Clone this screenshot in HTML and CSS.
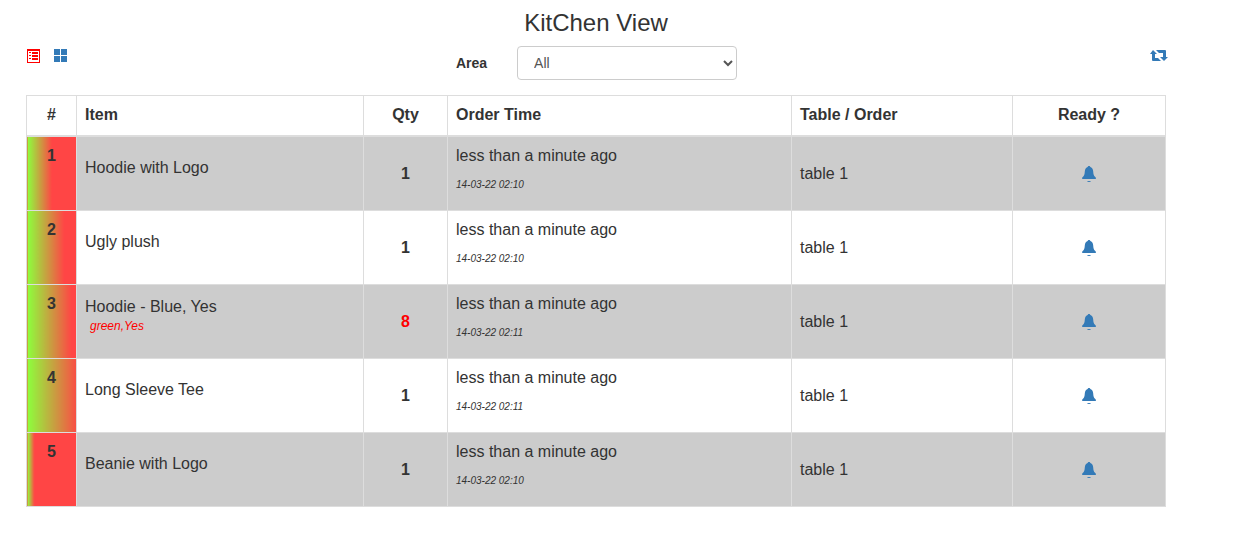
FILE: index.html
```
<!DOCTYPE html>
<html lang="en">
<head>
    <meta charset="UTF-8">
    <meta name="viewport" content="width=device-width, initial-scale=1.0">
    <title>KitChen View</title>
    <link rel="stylesheet" href="styles.css">
</head>
<body>
    <svg class="sprite" aria-hidden="true">
        <symbol id="bell" viewBox="0 0 14 16">
            <path d="M7 0C7.8 0 8.2.5 8.4 1.1C10.4 1.8 11 3.6 11.2 5.6C11.4 8 11.6 9.6 13 10.8C13.6 11.3 14 11.7 14 12.2C14 12.8 13.6 13 13 13H1C.4 13 0 12.8 0 12.2C0 11.7.4 11.3 1 10.8C2.4 9.6 2.6 8 2.8 5.6C3 3.6 3.6 1.8 5.6 1.1C5.8.5 6.2 0 7 0Z"/>
            <path d="M5 15H9Q8.5 16 7 16Q5.5 16 5 15Z"/>
        </symbol>
    </svg>

    <div class="container">
        <h1 class="title">KitChen View</h1>

        <div class="toolbar">
            <div class="views">
                <button class="icon-btn active" type="button" aria-label="List view">
                    <svg width="13" height="14" viewBox="0 0 13 14">
                        <path fill-rule="evenodd" d="M0 0H13V14H0ZM1 2V13H12V2Z"/>
                        <path d="M2 3H4V4H2ZM5 3H11V5H5ZM2 6H4V7H2ZM5 6H11V8H5ZM2 9H4V10H2ZM5 9H11V11H5Z"/>
                    </svg>
                </button>
                <button class="icon-btn" type="button" aria-label="Grid view">
                    <svg width="13" height="13" viewBox="0 0 13 13">
                        <path d="M0 0H6V6H0ZM7 0H13V6H7ZM0 7H6V13H0ZM7 7H13V13H7Z"/>
                    </svg>
                </button>
            </div>
            <div class="area">
                <label for="area">Area</label>
                <select id="area">
                    <option>All</option>
                </select>
            </div>
            <div class="actions">
                <button class="icon-btn refresh" type="button" aria-label="Refresh">
                    <svg width="18" height="12" viewBox="0 0 18 12">
                        <path d="M3 0L7 4H5V8H8L11 11H3Q2 11 2 10V4H0Z"/>
                        <path d="M6 0H15Q16 0 16 1V7H18L14 11L10 7H13V3H9Z"/>
                    </svg>
                </button>
            </div>
        </div>

        <table class="orders">
            <thead>
                <tr>
                    <th class="num">#</th>
                    <th class="item">Item</th>
                    <th class="qty">Qty</th>
                    <th class="time">Order Time</th>
                    <th class="place">Table / Order</th>
                    <th class="ready">Ready ?</th>
                </tr>
            </thead>
            <tbody>
                <tr>
                    <th class="num" style="--progress: 50%">1</th>
                    <td class="item"><p>Hoodie with Logo</p></td>
                    <td class="qty">1</td>
                    <td class="time"><p>less than a minute ago</p><p class="date">14-03-22 02:10</p></td>
                    <td class="place">table 1</td>
                    <td class="ready"><button class="icon-btn" type="button" aria-label="Ready"><svg width="14" height="16"><use href="#bell"/></svg></button></td>
                </tr>
                <tr>
                    <th class="num" style="--progress: 75%">2</th>
                    <td class="item"><p>Ugly plush</p></td>
                    <td class="qty">1</td>
                    <td class="time"><p>less than a minute ago</p><p class="date">14-03-22 02:10</p></td>
                    <td class="place">table 1</td>
                    <td class="ready"><button class="icon-btn" type="button" aria-label="Ready"><svg width="14" height="16"><use href="#bell"/></svg></button></td>
                </tr>
                <tr>
                    <th class="num" style="--progress: 90%">3</th>
                    <td class="item"><p>Hoodie - Blue, Yes<span class="note">green,Yes</span></p></td>
                    <td class="qty many">8</td>
                    <td class="time"><p>less than a minute ago</p><p class="date">14-03-22 02:11</p></td>
                    <td class="place">table 1</td>
                    <td class="ready"><button class="icon-btn" type="button" aria-label="Ready"><svg width="14" height="16"><use href="#bell"/></svg></button></td>
                </tr>
                <tr>
                    <th class="num" style="--progress: 105%">4</th>
                    <td class="item"><p>Long Sleeve Tee</p></td>
                    <td class="qty">1</td>
                    <td class="time"><p>less than a minute ago</p><p class="date">14-03-22 02:11</p></td>
                    <td class="place">table 1</td>
                    <td class="ready"><button class="icon-btn" type="button" aria-label="Ready"><svg width="14" height="16"><use href="#bell"/></svg></button></td>
                </tr>
                <tr>
                    <th class="num" style="--progress: 14%">5</th>
                    <td class="item"><p>Beanie with Logo</p></td>
                    <td class="qty">1</td>
                    <td class="time"><p>less than a minute ago</p><p class="date">14-03-22 02:10</p></td>
                    <td class="place">table 1</td>
                    <td class="ready"><button class="icon-btn" type="button" aria-label="Ready"><svg width="14" height="16"><use href="#bell"/></svg></button></td>
                </tr>
            </tbody>
        </table>
    </div>
</body>
</html>
```

FILE: styles.css
```
*{
    margin: 0;
    padding: 0;
    box-sizing: border-box;
}
body{
    font-family: "Liberation Sans", Arial, sans-serif;
    font-size: 16px;
    line-height: 22px;
    color: #333;
    background-color: white;
}
.sprite{
    display: none;
}
.container{
    padding: 10px 85px 46px 26px;
}
.title{
    font-size: 24px;
    font-weight: normal;
    line-height: 26px;
    text-align: center;
    margin-bottom: 10px;
}

/* view switch, area filter, refresh */
.toolbar{
    display: flex;
    align-items: center;
    margin-bottom: 15px;
}
.views, .actions{
    flex: 1;
    display: flex;
    align-items: center;
    gap: 14px;
    padding: 0 1px 15px;
}
.actions{
    justify-content: flex-end;
    padding-right: 0;
}
.icon-btn{
    border: none;
    background: none;
    color: #337ab7;
    cursor: pointer;
}
.icon-btn svg{
    display: block;
    fill: currentColor;
}
.active{
    color: red;
}
/* the wide arrows hang a little past the table edge */
.refresh{
    width: 16px;
}
.area{
    display: flex;
    align-items: center;
    gap: 30px;
    font-size: 14px;
}
.area label{
    font-weight: bold;
}
.area select{
    width: 220px;
    height: 34px;
    padding: 6px 12px;
    font-family: inherit;
    font-size: 14px;
    color: #555;
    background-color: white;
    border: 1px solid #ccc;
    border-radius: 4px;
}

.orders{
    width: 100%;
    table-layout: fixed;
    border-collapse: collapse;
}
.orders th, .orders td{
    border: 1px solid #ddd;
    padding: 8px;
    text-align: left;
    vertical-align: middle;
}
.orders thead th{
    border-bottom-width: 2px;
    padding-bottom: 9px;
}
.orders tbody tr:nth-child(odd){
    background-color: #ccc;
}
.orders .num{
    width: 50px;
    text-align: center;
    vertical-align: top;
}
.orders tbody .num{
    background-image: linear-gradient(to right, #8cff3c, #ff4545 var(--progress));
}
.orders .item{
    width: 287px;
}
.orders .qty{
    width: 84px;
    text-align: center;
    font-weight: bold;
}
.orders .many{
    color: red;
}
.orders .place{
    width: 221px;
}
.orders .ready{
    width: 153px;
    text-align: center;
}
.ready .icon-btn{
    vertical-align: middle;
}
.item p{
    margin-bottom: 12px;
}
.note{
    display: block;
    padding-left: 5px;
    font-size: 12px;
    font-style: italic;
    line-height: 17px;
    color: red;
}
.time p{
    margin-bottom: 11px;
}
.time .date{
    margin-bottom: 10px;
    font-size: 10px;
    font-style: italic;
    line-height: 14px;
}
```
